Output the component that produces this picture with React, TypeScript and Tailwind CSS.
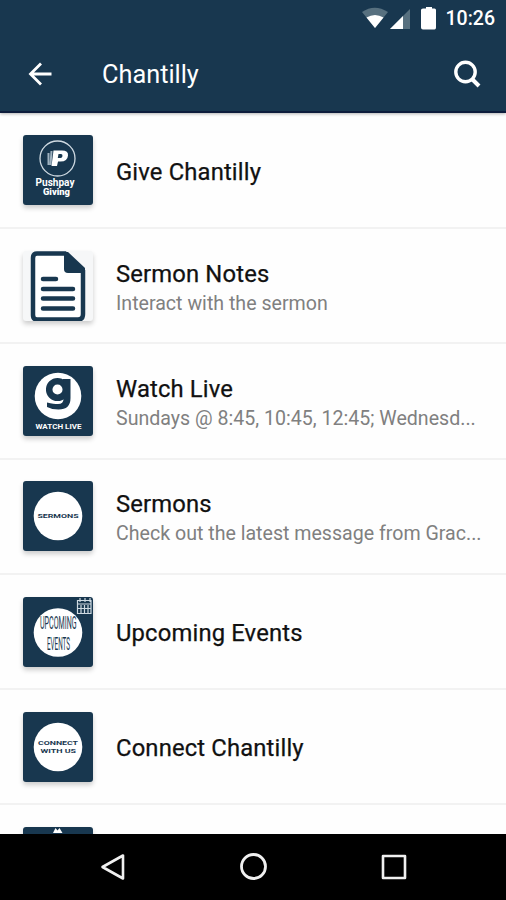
import type { ReactNode } from 'react';

const navy = '#18374f';

function Tile({ children, light = false }: { children?: ReactNode; light?: boolean }) {
  return (
    <div
      className={`h-[70px] w-[70px] shrink-0 overflow-hidden rounded-[3px] shadow-[0_3px_5px_rgba(0,0,0,0.2)] ${
        light ? 'bg-[#f6f7f8]' : 'bg-[#18374f]'
      }`}
    >
      <svg viewBox="0 0 70 70" className="block h-full w-full" fontFamily="Roboto, sans-serif">
        {children}
      </svg>
    </div>
  );
}

const Giving = () => (
  <Tile>
    <circle cx="34.500" cy="23.500" r="17.500" fill="none" stroke="#cfdae2" strokeWidth="1.300" />
    <path d="M25.500 18V30M28.500 16L27.500 30" stroke="#9fb2c0" strokeWidth="2" />
    <path fillRule="evenodd" d="M30.500 15.500H39Q45.500 15.500 45 20.500Q44.500 26.500 37.500 26.500H35L34 31H28.500ZM35.500 19L34.800 23H37.500Q39.300 23 39.500 21Q39.600 19 38 19Z" fill="#fff" />
    <text x="12.500" y="51" fontSize="10" fontWeight="700" fill="#fff" textLength="39" lengthAdjust="spacingAndGlyphs">Pushpay</text>
    <text x="20" y="60" fontSize="8.500" fontWeight="900" fill="#fff" textLength="27" lengthAdjust="spacingAndGlyphs">Giving</text>
  </Tile>
);

const Notes = () => (
  <Tile light>
    <path d="M14 2.500H42L60 20V63Q60 68.500 55 68.500H14Q10 68.500 10 64V7Q10 2.500 14 2.500Z" fill="#fff" stroke={navy} strokeWidth="4.500" />
    <path d="M41 1H45L62 17V22H45Q41 22 41 18Z" fill={navy} />
    <path d="M20 28H33M20 38H50M20 47.500H50M20 57.500H50" stroke={navy} strokeWidth="4.500" strokeLinecap="round" />
  </Tile>
);

const Watch = () => (
  <Tile>
    <circle cx="35" cy="30" r="23.300" fill="#fff" />
    <circle cx="34.500" cy="23.500" r="8.300" fill="none" stroke={navy} strokeWidth="6.500" />
    <path d="M40 13H47.500V32Q47.500 43.500 35.500 43.500Q29 43.500 24 41V36.500Q31 38 35 38Q40.500 38 40.500 33Z" fill={navy} />
    <text x="12.500" y="63.300" fontSize="6.500" fontWeight="700" fill="#fff" textLength="46" lengthAdjust="spacingAndGlyphs">WATCH LIVE</text>
  </Tile>
);

const Sermons = () => (
  <Tile>
    <circle cx="35" cy="35" r="24.300" fill="#fff" />
    <text x="14.500" y="36.500" fontSize="6" fontWeight="700" fill={navy} textLength="41" lengthAdjust="spacingAndGlyphs">SERMONS</text>
  </Tile>
);

const Events = () => (
  <Tile>
    <circle cx="35" cy="35.500" r="24.300" fill="#fff" />
    <g transform="scale(1 2.500)" fontSize="7.500" fill={navy}>
      <text x="17" y="13" textLength="36.500" lengthAdjust="spacingAndGlyphs">UPCOMING</text>
      <text x="24" y="21.200" textLength="23" lengthAdjust="spacingAndGlyphs">EVENTS</text>
    </g>
    <path d="M54.500 3.500H68V16.500H54.500ZM57 1V5M62 1V5M67 1V5M55 7H68M58 8V16M61.500 8V16M65 8V16M55 11.500H68" fill="none" stroke="#cfdae2" strokeWidth="1.200" />
  </Tile>
);

const Connect = () => (
  <Tile>
    <circle cx="35" cy="35" r="24.300" fill="#fff" />
    <text x="15" y="33" fontSize="6" fontWeight="700" fill={navy} textLength="40" lengthAdjust="spacingAndGlyphs">CONNECT</text>
    <text x="17.500" y="41" fontSize="6" fontWeight="700" fill={navy} textLength="35.500" lengthAdjust="spacingAndGlyphs">WITH US</text>
  </Tile>
);

const Partial = () => (
  <Tile>
    <path d="M30 6L32.500 1L34.500 3.500L36.500 1L39.500 6Z" fill="#fff" />
  </Tile>
);

const rows: { icon: ReactNode; title?: string; sub?: string }[] = [
  { icon: <Giving />, title: 'Give Chantilly' },
  { icon: <Notes />, title: 'Sermon Notes', sub: 'Interact with the sermon' },
  { icon: <Watch />, title: 'Watch Live', sub: 'Sundays @ 8:45, 10:45, 12:45; Wednesd...' },
  { icon: <Sermons />, title: 'Sermons', sub: 'Check out the latest message from Grac...' },
  { icon: <Events />, title: 'Upcoming Events' },
  { icon: <Connect />, title: 'Connect Chantilly' },
  { icon: <Partial /> },
];

export default function App() {
  return (
    <div className="flex h-[900px] w-[506px] flex-col overflow-hidden bg-[#fefefe] font-[Roboto,sans-serif]">
      <header className="z-10 flex h-[113px] shrink-0 flex-col border-b-2 border-[#0d1d3c] bg-[#18374f] text-white shadow-[0_1px_3px_rgba(0,0,0,0.3)]">
        <div className="flex h-[37px] items-center justify-end pr-[11px]">
          <svg viewBox="0 0 80 30" className="mb-[6px] h-[30px] w-[80px]">
            <path d="M2 11Q14.500 2.500 28 11L15 27Z" fill="#57707f" />
            <path d="M6.500 16.500Q15 11.500 23.500 16.500L15 27Z" fill="#fff" />
            <path d="M50 8V28H30Z" fill="#57707f" />
            <path d="M43 15V28H30Z" fill="#fff" />
            <path d="M64.500 7.500H66V6H72V7.500H74.500Q76 7.500 76 9V26.500Q76 28.500 74.500 28.500H63Q61 28.500 61 26.500V9Q61 7.500 63 7.500Z" fill="#fff" />
          </svg>
          <span className="ml-[6px] text-[19.500px] leading-[37px] font-medium">10:26</span>
        </div>
        <div className="flex h-[74px] items-center pr-[25px] pl-[28px]">
          <svg viewBox="0 0 24 24" className="h-[24px] w-[24px]" fill="none" stroke="#fff" strokeWidth="2.800">
            <path d="M23.500 12H2.500M13 1.500L2.500 12L13 22.500" />
          </svg>
          <h1 className="ml-[50px] grow pt-[2px] text-[25.300px] leading-[30px] font-normal">Chantilly</h1>
          <svg viewBox="0 0 28 28" className="h-[28px] w-[28px]" fill="none" stroke="#fff" strokeWidth="3.400">
            <circle cx="12.500" cy="12" r="9.700" />
            <path d="M18.500 18.500L26 26" strokeWidth="4" />
          </svg>
        </div>
      </header>
      <main className="min-h-0 grow overflow-hidden pt-[0.700px]">
        {rows.map((row, i) => (
          <div key={i} className="flex h-[115.300px] items-center border-b-2 border-[#f2f2f2] pl-[23px]">
            {row.icon}
            <div className={`ml-[23px] whitespace-nowrap ${row.sub ? 'pt-[6.500px]' : 'pt-[4px]'}`}>
              <div className="text-[23.800px] leading-[29px] font-normal tracking-[0.150px] text-[#111] [-webkit-text-stroke:0.250px_#111]">{row.title}</div>
              {row.sub && <div className="text-[19.600px] leading-[29px] text-[#808080]">{row.sub}</div>}
            </div>
          </div>
        ))}
      </main>
      <nav className="z-10 flex h-[66px] shrink-0 items-center justify-between bg-black pr-[98px] pl-[99px]">
        <svg viewBox="0 0 28 30" className="h-[30px] w-[28px]" fill="none" stroke="#f0f0f0" strokeWidth="2.600" strokeLinejoin="round">
          <path d="M3.500 15L24 3.500V26.500Z" />
        </svg>
        <svg viewBox="0 0 30 30" className="h-[30px] w-[30px]" fill="none" stroke="#f0f0f0" strokeWidth="2.800">
          <circle cx="14.500" cy="14.500" r="12" />
        </svg>
        <svg viewBox="0 0 28 28" className="h-[28px] w-[28px]" fill="none" stroke="#f0f0f0" strokeWidth="2.600" strokeLinejoin="round">
          <rect x="3" y="3" width="22" height="22" />
        </svg>
      </nav>
    </div>
  );
}
